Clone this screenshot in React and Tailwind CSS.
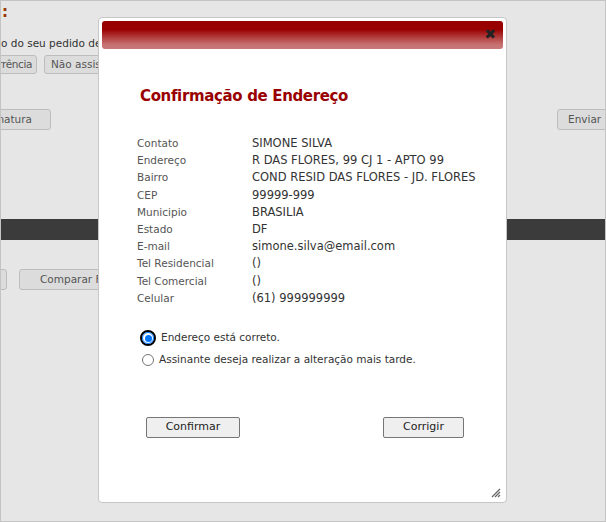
import React from "react";

const font = { fontFamily: '"DejaVu Sans", Verdana, sans-serif' };

function BgButton({ children, className = "" }) {
  return (
    <div
      className={
        "flex items-center px-[6px] bg-[#dcdcdc] border border-[#bdbdbd] rounded-[3px] text-[10.5px] text-[#555] whitespace-nowrap overflow-hidden " +
        className
      }
    >
      {children}
    </div>
  );
}

const rows = [
  ["Contato", "SIMONE SILVA"],
  ["Endereço", "R DAS FLORES, 99 CJ 1 - APTO 99"],
  ["Bairro", "COND RESID DAS FLORES - JD. FLORES"],
  ["CEP", "99999-999"],
  ["Municipio", "BRASILIA"],
  ["Estado", "DF"],
  ["E-mail", "simone.silva@email.com"],
  ["Tel Residencial", "()"],
  ["Tel Comercial", "()"],
  ["Celular", "(61) 999999999"],
];

export default function App() {
  return (
    <div
      className="relative w-[606px] h-[522px] overflow-hidden bg-[#e6e6e6] border border-[#c4c4c4]"
      style={font}
    >
      {/* background page */}
      <div className="flex flex-col">
        <div className="h-[22px] pl-[1px] pt-[1px] text-[15px] font-bold text-[#993300] leading-[20px]">:</div>
        <div className="mt-[13px] h-[14px] text-[10.5px] text-[#333] leading-[14px] whitespace-nowrap">
          o do seu pedido de c
        </div>
        <div className="mt-[5px] flex gap-[7px] -ml-[30px]">
          <BgButton className="h-[19px] w-[66px] justify-end pr-[4px] tracking-[-0.4px]">ocorrência</BgButton>
          <BgButton className="h-[19px] w-[90px]">Não assistiu</BgButton>
        </div>
        <div className="mt-[35px] flex justify-between">
          <BgButton className="h-[21px] -ml-[30px] w-[80px] justify-end border-[#8a8a8a] text-[#333] pr-[18px]">Assinatura</BgButton>
          <BgButton className="h-[21px] w-[80px] -mr-[32px] pl-[10px]">Enviar</BgButton>
        </div>
        <div className="mt-[89px] h-[21px] bg-[#3b3b3b]" />
        <div className="mt-[29px] flex gap-[12px] -ml-[30px]">
          <BgButton className="h-[21px] w-[36px] border-[#8a8a8a]">&nbsp;</BgButton>
          <BgButton className="h-[21px] w-[110px] border-[#8a8a8a] text-[#333] pl-[20px]">Comparar Faturas</BgButton>
        </div>
      </div>

      {/* modal */}
      <div className="absolute left-[97px] top-[16px] w-[409px] h-[486px] bg-white border border-[#c6c6c6] rounded-[4px] p-[3px] flex flex-col">
        <div className="relative h-[28px] rounded-[3px] bg-[linear-gradient(to_bottom,#990000_0%,#990000_30%,#b54545_62%,#c87272_85%,#c97878_100%)]">
          <span className="absolute right-[7px] top-[6px] text-[14px] leading-[15px] font-bold text-[#222]">✖</span>
        </div>
        <div className="pl-[38px] pt-[38px] text-[15px] tracking-[-0.35px] font-bold text-[#990000] leading-[18px]">
          Confirmação de Endereço
        </div>
        <div className="mt-[30px] pl-[35px] flex flex-col leading-[17.2px]">
          {rows.map(([l, v]) => (
            <div key={l} className="flex items-baseline">
              <div className="w-[115px] text-[10.5px] text-[#555]">{l}</div>
              <div className="text-[11.5px] text-[#333]">{v}</div>
            </div>
          ))}
        </div>
        <div className="mt-[24px] pl-[40px] flex flex-col gap-[8px] text-[10.5px] text-[#333]">
          <label className="flex items-center gap-[5px] h-[14px]">
            <span className="w-[16px] h-[16px] rounded-full border-[2px] border-black flex items-center justify-center -ml-[2px]">
              <span className="w-[12px] h-[12px] rounded-full border border-[#0075ff] flex items-center justify-center bg-white">
                <span className="w-[7px] h-[7px] rounded-full bg-[#0075ff]" />
              </span>
            </span>
            <span>Endereço está correto.</span>
          </label>
          <label className="flex items-center gap-[5px] h-[14px]">
            <span className="w-[12px] h-[12px] rounded-full border border-[#767676] bg-white" />
            <span>Assinante deseja realizar a alteração mais tarde.</span>
          </label>
        </div>
        <div className="mt-[50px] flex justify-between pl-[44px] pr-[39px]">
          <button className="w-[94px] h-[21px] bg-[#efefef] border border-[#767676] rounded-[2px] text-[11px] text-[#222]">
            Confirmar
          </button>
          <button className="w-[81px] h-[21px] bg-[#efefef] border border-[#767676] rounded-[2px] text-[11px] text-[#222]">
            Corrigir
          </button>
        </div>
        <div className="flex-1" />
        <div className="flex justify-end pr-[2px] pb-[1px]">
          <svg width="10" height="10" viewBox="0 0 10 10">
            <path d="M9 1L1 9M9 4L4 9M9 7L7 9" stroke="#666" strokeWidth="1.2" />
          </svg>
        </div>
      </div>
    </div>
  );
}
